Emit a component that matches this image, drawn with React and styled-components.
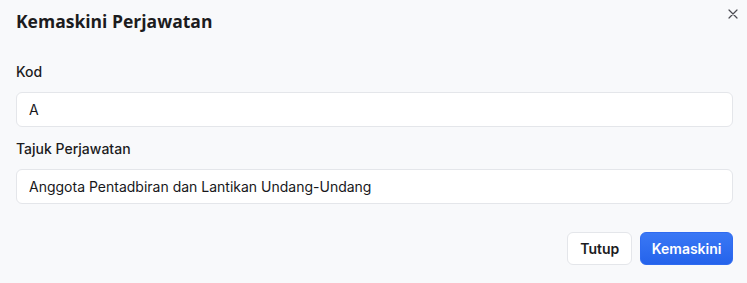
import React from 'react';
import styled, { createGlobalStyle } from 'styled-components';

const GlobalStyle = createGlobalStyle`
  html, body {
    margin: 0;
    padding: 0;
    background: #f8f9fb;
  }
  body {
    font-family: Inter, "Noto Sans", sans-serif;
    color: #18181b;
  }
`;

const Dialog = styled.div`
  position: relative;
  width: 747px;
  height: 283px;
  box-sizing: border-box;
  padding: 9px 14px 0 16px;
  background: #f8f9fb;
`;

const Title = styled.h2`
  margin: 0;
  font-family: "Open Sans", Lato, sans-serif;
  font-size: 17.5px;
  line-height: 24px;
  font-weight: 700;
  color: #1c1c1e;
  letter-spacing: 0;
`;

const CloseButton = styled.button`
  position: absolute;
  top: 7px;
  right: 7px;
  width: 14px;
  height: 14px;
  padding: 0;
  border: none;
  background: transparent;
  display: flex;
  align-items: center;
  justify-content: center;
  cursor: pointer;
`;

const Form = styled.div`
  display: flex;
  flex-direction: column;
  margin-top: 29px;
`;

const Field = styled.div`
  display: flex;
  flex-direction: column;
  gap: 10px;
  margin-bottom: 12px;
`;

const Label = styled.label`
  font-size: 14px;
  line-height: 20px;
  font-weight: 500;
  color: #1c1c1e;
`;

const Input = styled.input`
  box-sizing: border-box;
  width: 717px;
  height: 35px;
  padding: 0 12px;
  border: 1px solid #e4e6ea;
  border-radius: 6px;
  background: #fff;
  font-family: Inter, sans-serif;
  font-size: 14px;
  color: #18181b;
  outline: none;
`;

const Footer = styled.div`
  display: flex;
  justify-content: flex-end;
  gap: 8px;
  width: 717px;
  margin-top: 16px;
`;

const Button = styled.button`
  height: 33px;
  padding: 0 ${p => (p.$primary ? '10.5px' : '12px')};
  border-radius: 6px;
  font-family: Inter, sans-serif;
  font-size: 14px;
  font-weight: 600;
  cursor: pointer;
  border: 1px solid ${p => (p.$primary ? '#2f6bf0' : '#e4e6ea')};
  background: ${p => (p.$primary ? 'linear-gradient(#3a78f5, #2563eb)' : '#fff')};
  color: ${p => (p.$primary ? '#fff' : '#1c1c1e')};
`;

export default function App() {
  return (
    <>
      <GlobalStyle />
      <Dialog>
        <Title>Kemaskini Perjawatan</Title>
        <CloseButton aria-label="Tutup">
          <svg width="10" height="10" viewBox="0 0 10 10" fill="none" stroke="#4b4b52" strokeWidth="1.2" strokeLinecap="round">
            <path d="M1 1L9 9M9 1L1 9" />
          </svg>
        </CloseButton>
        <Form>
          <Field>
            <Label>Kod</Label>
            <Input defaultValue="A" />
          </Field>
          <Field>
            <Label>Tajuk Perjawatan</Label>
            <Input defaultValue="Anggota Pentadbiran dan Lantikan Undang-Undang" />
          </Field>
        </Form>
        <Footer>
          <Button>Tutup</Button>
          <Button $primary>Kemaskini</Button>
        </Footer>
      </Dialog>
    </>
  );
}
